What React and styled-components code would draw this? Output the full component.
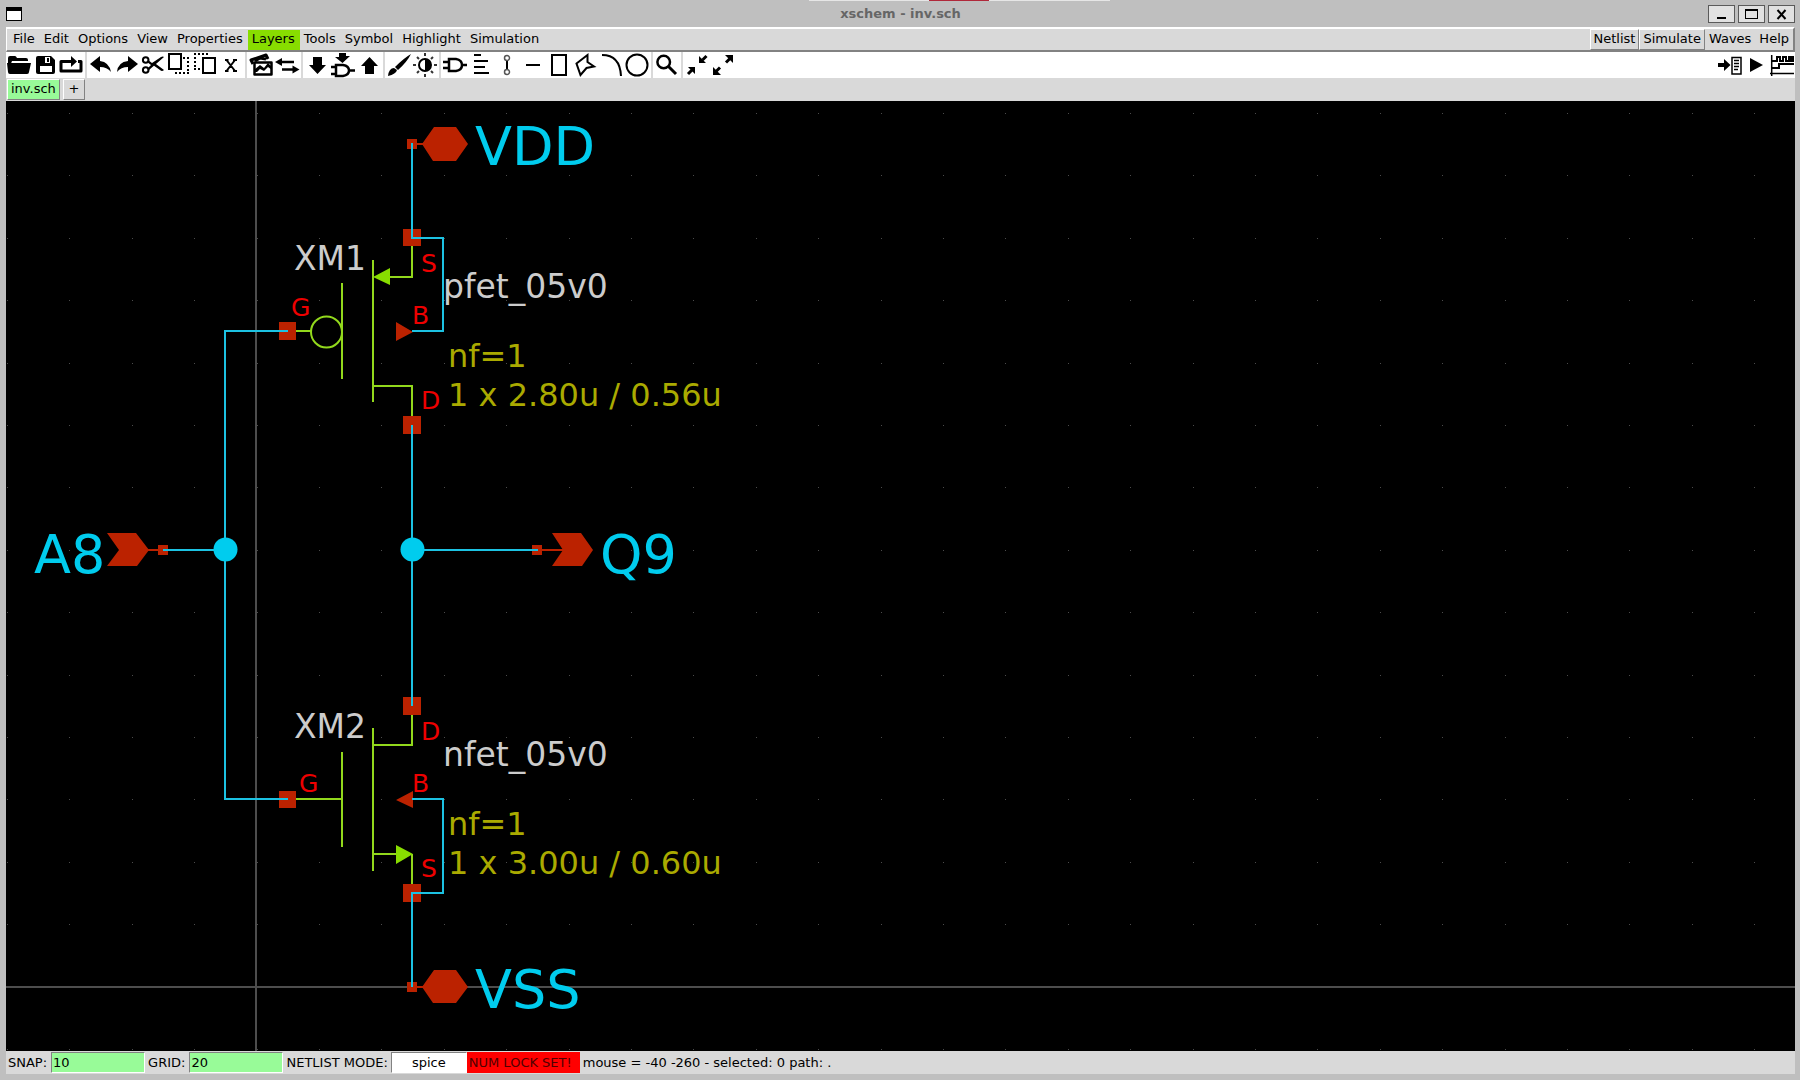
import React from 'react';
import styled, { createGlobalStyle, css } from 'styled-components';

const Global = createGlobalStyle`
  * { box-sizing: border-box; }
  body {
    margin: 0;
    background: #bfbfbf;
    font-family: "DejaVu Sans", Verdana, sans-serif;
    font-size: 13px;
    line-height: 18px;
    color: #000;
  }
  button, input, select { font: inherit; color: inherit; margin: 0; }
`;

const raised = css`
  border: 1px solid;
  border-color: #fff #828282 #828282 #fff;
`;

const sunken = css`
  border: 1px solid;
  border-color: #828282 #fff #fff #828282;
`;

const Window = styled.div`
  display: flex;
  flex-direction: column;
  height: 100vh;
  padding: 0 5px 6px 6px;
  background: #bfbfbf;
`;

const TitleBar = styled.header`
  position: relative;
  display: grid;
  grid-template-columns: 1fr auto 1fr;
  align-items: center;
  height: 27px;
`;

const PeekStrip = styled.div`
  position: absolute;
  top: 0;
  left: calc(50% - 92px);
  width: 301px;
  height: 1px;
  padding: 0 121px 0 120px;
  background: #e6e6e6;
`;

const PeekTab = styled.div`
  height: 1px;
  background: #b0283a;
`;

const WindowIcon = styled.button`
  width: 16px;
  height: 14px;
  padding: 0;
  background: #fff;
  border: 1px solid #000;
  border-top-width: 4px;
`;

const Title = styled.h1`
  margin: 0;
  font-size: 13px;
  line-height: 18px;
  font-weight: bold;
  color: #666;
`;

const WindowControls = styled.div`
  display: flex;
  justify-content: flex-end;
  gap: 3px;
`;

const WindowButton = styled.button`
  width: 27px;
  height: 18px;
  padding: 0;
  background: #e1e1e1;
  border: 1px solid #5a5a5a;
  svg { display: block; width: 25px; height: 16px; }
`;

const MenuBar = styled.nav`
  display: flex;
  justify-content: space-between;
  height: 25px;
  padding-left: 2px;
  background: #d9d9d9;
  border: 2px solid;
  border-color: #fff #828282 #828282 #fff;
  border-left-width: 1px;
`;

const MenuGroup = styled.div`
  display: flex;
  align-items: center;
`;

const MenuItem = styled.button`
  height: 20px;
  padding: 0 5px 2px 4px;
  border: 0;
  white-space: nowrap;
  background: ${(p) => (p.$active ? '#88dd00' : 'transparent')};
  ${(p) => p.$right && css`
    padding: 0 4px 2px;
  `}
  ${(p) => p.$raised && css`
    ${raised}
    height: 21px;
    padding: 0 3px 2px;
  `}
`;

const ToolBar = styled.div`
  display: flex;
  justify-content: space-between;
  height: 26px;
  background: #fff;
`;

const ToolGroups = styled.div`
  display: flex;
`;

const ToolGroup = styled.div`
  display: flex;
  & + & {
    margin-left: 1px;
    border-left: 2px solid #d9d9d9;
    padding-left: 1px;
  }
`;

const Tool = styled.button`
  width: 26px;
  height: 26px;
  padding: 0;
  border: 0;
  background: #fff;
  svg { display: block; width: 26px; height: 26px; }
`;

const TabBar = styled.div`
  display: flex;
  align-items: stretch;
  gap: 3px;
  height: 23px;
  padding: 1px 0 1px 1px;
  background: #d9d9d9;
`;

const Tab = styled.button`
  ${raised}
  min-width: 22px;
  padding: 0 3px 2px;
  line-height: 16px;
  background: ${(p) => (p.$active ? '#98fb98' : '#d9d9d9')};
`;

const Canvas = styled.main`
  flex: 1;
  min-height: 0;
  background: #000;
  overflow: hidden;
  svg { display: block; width: 100%; height: 100%; }
`;

const StatusBar = styled.footer`
  display: flex;
  align-items: center;
  gap: 3px;
  height: 23px;
  padding-left: 2px;
  background: #d9d9d9;
  white-space: nowrap;
`;

const Field = styled.label`
  display: flex;
  align-items: center;
  gap: ${(p) => p.$gap || 4}px;
`;

const Entry = styled.input`
  ${sunken}
  width: 94px;
  height: 21px;
  padding: 0 1px;
  background: #98fb98;
`;

const ModeSelect = styled.select`
  ${sunken}
  appearance: none;
  width: 76px;
  height: 21px;
  padding: 0;
  background: #fff;
  border-radius: 0;
  text-align: center;
  text-align-last: center;
`;

const StatusGroup = styled.div`
  display: flex;
  align-items: center;
`;

const Warning = styled.span`
  height: 21px;
  padding: 0 8px 0 2px;
  line-height: 21px;
  background: #f00;
  color: #500000;
`;

const Stroke = ({ w = 2, ...rest }) => (
  <path fill="none" stroke="#000" strokeWidth={w} {...rest} />
);

const icons = {
  open: <path d="M2 19V6q0-2 2-2h5q1 0 2 2h9q2 0 2 2v1H6zM1 11h24l-2 9q0 2-2 2H4q-2 0-2-2z" />,
  save: (
    <>
      <path d="M6 4h13l4 4v12q0 2-2 2H6q-2 0-2-2V6q0-2 2-2z" />
      <path fill="#fff" d="M8 14h12v6H8zM13 5h5v6h-5z" />
      <path d="M15 6h2v4h-2z" />
    </>
  ),
  reload: (
    <>
      <Stroke w={3} strokeLinejoin="round" d="M8 9.500H3V19h20V9.500h-3M8 9.500h7" />
      <path d="M13 4l6 5.500-6 5.500z" />
    </>
  ),
  undo: <path d="M2 12l10-8v5q9 1 11 11-4-5-11-5v5z" />,
  redo: <path d="M24 12L14 4v5Q4 10 3 20q4-5 11-5v5z" />,
  cut: (
    <>
      <Stroke w={2} d="M8.500 8a2.800 2.800 0 1 1-5.600 0 2.800 2.800 0 0 1 5.600 0zM8.500 18a2.800 2.800 0 1 1-5.600 0 2.800 2.800 0 0 1 5.600 0z" />
      <path d="M8 8l4 3 9-6q2-1 3 0L9 18l-2-1 4-4-4-3zM13 13l3-1 8 6q-2 2-4 0z" />
    </>
  ),
  copy: (
    <>
      <Stroke d="M3 2h12v15H3z" />
      <path d="M17 5h2v2h-2zM21 5h2v2h-2zM21 9h2v2h-2zM21 13h2v2h-2zM21 17h2v2h-2zM21 20h2v2h-2zM17 20h2v2h-2zM13 20h2v2h-2zM9 20h2v2H9z" />
    </>
  ),
  paste: (
    <>
      <Stroke d="M11 6h12v15H11z" />
      <path d="M2 1h2v2H2zM6 1h2v2H6zM10 1h2v2h-2zM14 1h2v2h-2zM2 5h2v2H2zM2 9h2v2H2zM2 13h2v2H2zM2 16h2v2H2zM6 16h2v2H6z" />
    </>
  ),
  del: <Stroke d="M8.500 8l8.500 11M17 8L8.500 19M7 8h3.500M15 8h4M7 19h3.500M15 19h4" />,
  images: (
    <>
      <Stroke w={3} strokeLinejoin="round" d="M5 12L3 8l15-5 2 4M7 9l5-3 6 1" />
      <Stroke w={2.500} strokeLinejoin="round" d="M6.500 10.500h17v12h-17z" />
      <path d="M7 20v-3l5-4 4 3 4-5 4 4v3l-4-3-4 4-4-2-3 3z" />
    </>
  ),
  swap: (
    <>
      <Stroke w={2.500} d="M6 10h14M8 17.500h13" />
      <path d="M1 10l7-4v8zM25.500 17.500l-7-4v8z" />
    </>
  ),
  down: <path d="M9 5h9v8h4l-8.500 9L5 13h4z" />,
  insert: (
    <>
      <path d="M9 1h7v3h4l-7.500 7L5 5h4z" />
      <Stroke w={2.500} d="M6 13h7q6 1 6 5.500T13 24H6zM1 15h5M1 22h5M19 18.500h6" />
    </>
  ),
  up: <path d="M9 22h9v-8h4l-8.500-9L5 14h4z" />,
  brush: <path d="M25 2Q18 6 9 15l3 3Q21 10 25 2zM8 16q-5 0-6 8 8-2 9-6z" />,
  contrast: (
    <>
      <Stroke d="M19 13a6 6 0 1 1-12 0 6 6 0 0 1 12 0z" />
      <path d="M13 7a6 6 0 0 1 0 12z" />
      <Stroke stroke="#333" d="M13 1v3M13 22v3M1 13h3M22 13h3M5 5l2 2M19 19l2 2M5 21l2-2M19 7l2-2" />
    </>
  ),
  gate: <Stroke w={2.500} d="M7 7h7q6 1 6 6t-6 6H7zM1 10h6M1 16h6M20 13h5" />,
  text: <Stroke d="M6 3h7M6 9h14M6 15h11M6 21h15" />,
  wire: (
    <>
      <Stroke d="M13 8v10" />
      <Stroke w={1.500} stroke="#555" d="M15.500 6a2.500 2.500 0 1 1-5 0 2.500 2.500 0 0 1 5 0zM15.500 20a2.500 2.500 0 1 1-5 0 2.500 2.500 0 0 1 5 0z" />
    </>
  ),
  line: <Stroke d="M6 13h14" />,
  rect: <Stroke d="M6 3h14v20H6z" />,
  polygon: <Stroke d="M4.500 11.500l11-8.500v7l6.500 4.500-7.500 1.500L8.500 23z" />,
  arc: <Stroke d="M4 3q18 0 19 21" />,
  circle: <Stroke d="M23.500 13a10.500 10.500 0 1 1-21 0 10.500 10.500 0 0 1 21 0z" />,
  zoom: (
    <>
      <Stroke w={2.500} d="M16 10a6.300 6.300 0 1 1-12.600 0 6.300 6.300 0 0 1 12.600 0z" />
      <Stroke w={3} d="M14 14l8 8" />
    </>
  ),
  shrink: (
    <>
      <Stroke w={3} d="M22.500 4l-4 4M4 22l4-4" />
      <path d="M15 4v7h7zM4 15h7v7z" />
    </>
  ),
  expand: (
    <>
      <Stroke w={3} d="M16 10.500l4-4M10 15.500l-4 4" />
      <path d="M15 3h8v8zM3 15v8h8z" />
    </>
  ),
  netlist: (
    <>
      <path d="M1 11h6V7l6.500 6L7 19v-4H1z" />
      <Stroke w={1.500} d="M15 5.500h9v16.500h-9z" />
      <Stroke w={1.500} d="M17 8.500h5M17 11.500h5M17 14.500h5M17 17.500h4" />
    </>
  ),
  play: <path d="M7 6l13 7-13 7z" />,
  waves: (
    <>
      <Stroke w={1.500} d="M2.700 3v21M1 21.500h24" />
      <Stroke d="M3 9h5V5h3v4h3V5h3v4h3V5h2v4h2V5h1M3 16h7v-4h15" />
    </>
  ),
};

const toolGroups = [
  [['open', 'Open'], ['save', 'Save'], ['reload', 'Reload']],
  [['undo', 'Undo'], ['redo', 'Redo'], ['cut', 'Cut'], ['copy', 'Copy'], ['paste', 'Paste'], ['del', 'Delete']],
  [['images', 'Duplicate'], ['swap', 'Change order']],
  [['down', 'Descend schematic'], ['insert', 'Descend symbol'], ['up', 'Go back']],
  [['brush', 'Highlight'], ['contrast', 'Toggle colours']],
  [
    ['gate', 'Insert symbol'], ['text', 'Insert text'], ['wire', 'Insert wire'], ['line', 'Insert line'],
    ['rect', 'Insert rectangle'], ['polygon', 'Insert polygon'], ['arc', 'Insert arc'], ['circle', 'Insert circle'],
  ],
  [['zoom', 'Zoom box']],
  [['shrink', 'Zoom out'], ['expand', 'Zoom full']],
];

const runTools = [['netlist', 'Netlist'], ['play', 'Simulate'], ['waves', 'Waves']];

const ToolButton = ({ icon, label }) => (
  <Tool aria-label={label}>
    <svg viewBox="0 0 26 26" aria-hidden="true">{icons[icon]}</svg>
  </Tool>
);

const menus = ['File', 'Edit', 'Options', 'View', 'Properties', 'Layers', 'Tools', 'Symbol', 'Highlight', 'Simulation'];

const gridDots = () => {
  let d = '';
  for (let r = 0; r < 24; r += 1) {
    for (let c = 0; c < 48; c += 1) {
      d += `M${Math.round(1 + c * 62.4)} ${Math.round(12 + r * 62.4)}h1v1h-1z`;
    }
  }
  return d;
};

const Label = styled.text`
  font-size: ${(p) => p.$size}px;
  fill: ${(p) => p.$color};
`;

const labels = [
  [475, 165, 'net', 'VDD'],
  [475, 1008, 'net', 'VSS'],
  [34, 573, 'net', 'A8'],
  [600, 573, 'net', 'Q9'],
  [294, 270, 'name', 'XM1'],
  [443, 298, 'name', 'pfet_05v0'],
  [448, 367, 'size', 'nf=1'],
  [448, 406, 'size', '1 x 2.80u / 0.56u'],
  [294, 738, 'name', 'XM2'],
  [443, 766, 'name', 'nfet_05v0'],
  [448, 835, 'size', 'nf=1'],
  [448, 874, 'size', '1 x 3.00u / 0.60u'],
  [421, 272, 'pin', 'S'],
  [412, 324, 'pin', 'B'],
  [291, 316, 'pin', 'G'],
  [421, 409, 'pin', 'D'],
  [421, 740, 'pin', 'D'],
  [412, 792, 'pin', 'B'],
  [299, 792, 'pin', 'G'],
  [421, 877, 'pin', 'S'],
];

const labelKinds = {
  net: [54, '#00ccee'],
  name: [33, '#cccccc'],
  size: [32, '#aaaa00'],
  pin: [25, '#ee0000'],
};

const Schematic = () => (
  <svg role="img" aria-label="Inverter schematic">
    <path d={gridDots()} fill="#4c4c4c" shapeRendering="crispEdges" />
    <g transform="translate(-6 -101)">
      <g fill="none" stroke="#4d4d4d" strokeWidth="2">
        <path d="M256 0v4000M0 987h6000" />
      </g>
      <g fill="none" stroke="#92d81c" strokeWidth="2">
        <path d="M296 331h15M342 283v96M373 260v142M412 246v31h-22M373 386h39v30" />
        <circle cx="326.500" cy="332" r="15.500" />
        <path d="M296 799h46M342 752v95M373 728v143M412 715v30h-39M373 854h24M412 854v31" />
      </g>
      <path fill="#88dd00" d="M373 277l17-9v17zM413 854l-17-9v19z" />
      <g fill="#bb2200">
        <path d="M279 322h17v18h-17zM403 229h18v17h-18zM403 416h18v18h-18z" />
        <path d="M279 791h17v17h-17zM403 697h18v18h-18zM403 884h18v18h-18z" />
        <path d="M396 322v19l17-9zM413 791v17l-17-8z" />
        <path d="M407 139h10v10h-10zM407 982h10v10h-10zM158 545h10v10h-10zM532 545h10v10h-10z" />
        <path d="M417 143h6v2h-6zM417 986h6v2h-6zM148 549h11v2h-11zM542 549h22v2h-22z" />
        <path d="M422 144l12-17h22l12 17-12 17h-23zM422 987l12-17h22l12 17-12 16h-23z" />
        <path d="M107 533h29l13 17-12 16h-30l12-16zM552 533h29l12 17-11 16h-30l11-16z" />
      </g>
      <g fill="none" stroke="#1cc2e2" strokeWidth="2">
        <path d="M288 331h-63v468h63M163 550h62" />
        <path d="M412 143v95h31v93h-31M412 425v281M412 550h126M412 987v-94h31v-94h-31" />
      </g>
      <g fill="#00ccee">
        <circle cx="225.500" cy="549.500" r="12" />
        <circle cx="412.500" cy="549.500" r="12" />
      </g>
      {labels.map(([x, y, kind, text]) => (
        <Label key={`${x}-${y}`} x={x} y={y} $size={labelKinds[kind][0]} $color={labelKinds[kind][1]}>
          {text}
        </Label>
      ))}
    </g>
  </svg>
);

export default function App() {
  return (
    <>
      <Global />
      <Window>
        <TitleBar>
          <PeekStrip><PeekTab /></PeekStrip>
          <WindowIcon aria-label="Window menu" />
          <Title>xschem - inv.sch</Title>
          <WindowControls>
            <WindowButton aria-label="Minimize">
              <svg viewBox="0 0 25 16"><path d="M8 11h9v2H8z" /></svg>
            </WindowButton>
            <WindowButton aria-label="Maximize">
              <svg viewBox="0 0 25 16"><path d="M6 3h13v10H6zM7 5v7h11V5z" fillRule="evenodd" /></svg>
            </WindowButton>
            <WindowButton aria-label="Close">
              <svg viewBox="0 0 25 16"><Stroke d="M8.500 4l8 9M16.500 4l-8 9" /></svg>
            </WindowButton>
          </WindowControls>
        </TitleBar>
        <MenuBar>
          <MenuGroup>
            {menus.map((m) => <MenuItem key={m} $active={m === 'Layers'}>{m}</MenuItem>)}
          </MenuGroup>
          <MenuGroup>
            <MenuItem $raised>Netlist</MenuItem>
            <MenuItem $raised>Simulate</MenuItem>
            <MenuItem $right>Waves</MenuItem>
            <MenuItem $right>Help</MenuItem>
          </MenuGroup>
        </MenuBar>
        <ToolBar>
          <ToolGroups>
            {toolGroups.map((group) => (
              <ToolGroup key={group[0][0]}>
                {group.map(([icon, label]) => <ToolButton key={icon} icon={icon} label={label} />)}
              </ToolGroup>
            ))}
          </ToolGroups>
          <ToolGroup>
            {runTools.map(([icon, label]) => <ToolButton key={icon} icon={icon} label={label} />)}
          </ToolGroup>
        </ToolBar>
        <TabBar>
          <Tab $active>inv.sch</Tab>
          <Tab>+</Tab>
        </TabBar>
        <Canvas><Schematic /></Canvas>
        <StatusBar>
          <Field>SNAP:<Entry defaultValue="10" /></Field>
          <Field>GRID:<Entry defaultValue="20" /></Field>
          <StatusGroup>
            <Field $gap={3}>
              NETLIST MODE:
              <ModeSelect defaultValue="spice">
                <option>spice</option>
              </ModeSelect>
            </Field>
            <Warning>NUM LOCK SET!</Warning>
          </StatusGroup>
          <span>mouse = -40 -260 - selected: 0 path: .</span>
        </StatusBar>
      </Window>
    </>
  );
}
